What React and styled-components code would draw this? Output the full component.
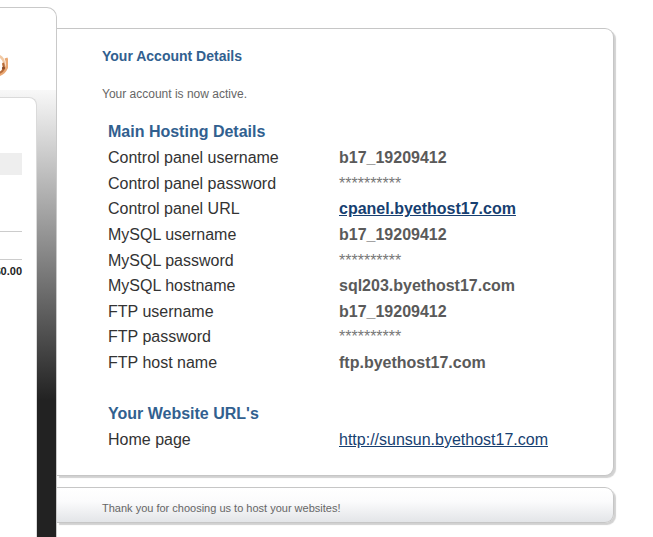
import React from "react";
import styled, { createGlobalStyle } from "styled-components";

const GlobalStyle = createGlobalStyle`
  body {
    margin: 0;
    background: #fff;
    font-family: "Liberation Sans", Arial, sans-serif;
  }
`;

const Page = styled.div`
  display: flex;
  align-items: flex-start;
  width: 653px;
  height: 537px;
  overflow: hidden;
`;

const Sidebar = styled.div`
  width: 57px;
  flex-shrink: 0;
  height: 530px;
  margin-top: 7px;
  box-sizing: border-box;
  border-top: 1px solid #c9c9c9;
  border-right: 1px solid #c9c9c9;
  border-top-right-radius: 10px;
  display: flex;
  flex-direction: column;
  overflow: hidden;
`;

const LogoArea = styled.div`
  height: 82px;
  flex-shrink: 0;
  padding-top: 41px;
  box-sizing: border-box;
`;

const Logo = styled.svg`
  display: block;
  margin-left: -14px;
`;

const SideLower = styled.div`
  flex: 1;
  padding: 7px 19px 0 0;
  background: linear-gradient(#f8f8f8 0, #222 310px, #222 100%);
`;

const SideCard = styled.div`
  height: 100%;
  background: #fff;
  border: 1px solid #dadada;
  border-left: none;
  border-bottom: none;
  border-top-right-radius: 8px;
  display: flex;
  flex-direction: column;
  align-items: flex-end;
  padding-right: 14px;
  overflow: hidden;
`;

const SideBand = styled.div`
  width: 200px;
  flex-shrink: 0;
  height: 22px;
  margin-top: 55px;
  background: #eeeeee;
`;

const SideRule = styled.div`
  width: 200px;
  flex-shrink: 0;
  height: 1px;
  margin-top: ${(p) => p.$gap}px;
  background: #cccccc;
`;

const SidePrice = styled.div`
  margin-top: 5px;
  font-size: 11px;
  line-height: 13px;
  font-weight: bold;
  color: #222;
  white-space: nowrap;
`;

const Main = styled.div`
  width: 557px;
  flex-shrink: 0;
  margin-top: 28px;
  display: flex;
  flex-direction: column;
`;

const Panel = styled.div`
  box-sizing: border-box;
  background: #fff;
  border: 1px solid #c6c6c6;
  border-left: none;
  border-radius: 0 9px 9px 0;
  box-shadow: 2px 2px 1px rgba(0, 0, 0, 0.18);
  padding: 19px 0 23px 45px;
`;

const Title = styled.div`
  font-size: 14px;
  line-height: 17px;
  font-weight: bold;
  color: #31608f;
`;

const Note = styled.div`
  margin-top: 22px;
  font-size: 12px;
  line-height: 14px;
  color: #666;
`;

const Details = styled.div`
  margin: 18px 0 0 6px;
  display: grid;
  grid-template-columns: 231px auto;
  grid-auto-rows: 25.65px;
  align-items: center;
  font-size: 16px;
  line-height: 19px;
`;

const Heading = styled.div`
  grid-column: 1 / span 2;
  font-weight: bold;
  color: #31608f;
`;

const Label = styled.div`
  color: #333;
`;

const Value = styled.div`
  color: ${(p) => (p.$secret ? "#777" : "#5a5a5a")};
  font-weight: ${(p) => (p.$secret ? "normal" : "bold")};
`;

const Link = styled.a`
  color: #173f71;
  font-weight: ${(p) => (p.$bold ? "bold" : "normal")};
  text-decoration: underline;
  justify-self: start;
`;

const Spacer = styled.div`
  grid-column: 1 / span 2;
`;

const Footer = styled.div`
  margin-top: 11px;
  height: 36px;
  box-sizing: border-box;
  border: 1px solid #c6c6c6;
  border-left: none;
  border-radius: 0 9px 9px 0;
  background: linear-gradient(#ffffff 0%, #fbfbfc 40%, #e3e5e8 100%);
  box-shadow: 2px 2px 1px rgba(0, 0, 0, 0.18);
  display: flex;
  align-items: center;
  padding: 6px 0 0 45px;
  font-size: 11px;
  color: #666;
`;

const hosting = [
  ["Control panel username", "b17_19209412"],
  ["Control panel password", "**********", "secret"],
  ["Control panel URL", "cpanel.byethost17.com", "link"],
  ["MySQL username", "b17_19209412"],
  ["MySQL password", "**********", "secret"],
  ["MySQL hostname", "sql203.byethost17.com"],
  ["FTP username", "b17_19209412"],
  ["FTP password", "**********", "secret"],
  ["FTP host name", "ftp.byethost17.com"],
];

const App = () => {
  return (
    <>
      <GlobalStyle />
      <Page>
        <Sidebar>
          <LogoArea>
            <Logo width="22" height="30" viewBox="0 0 22 30">
              <path d="M4 6 C 14 4, 20 11, 17 17" fill="none" stroke="#f1c9a4" strokeWidth="2.5" />
              <path d="M20 9 C 23 16, 20 24, 12 26" fill="none" stroke="#e9a874" strokeWidth="3" />
              <path d="M17 14 C 19 19, 17 23, 13 24" fill="none" stroke="#b86c3a" strokeWidth="2.2" />
              <circle cx="17.5" cy="19" r="1.6" fill="#8a4c2a" />
            </Logo>
          </LogoArea>
          <SideLower>
            <SideCard>
              <SideBand />
              <SideRule $gap={56} />
              <SideRule $gap={27} />
              <SidePrice>$0.00</SidePrice>
            </SideCard>
          </SideLower>
        </Sidebar>
        <Main>
          <Panel>
            <Title>Your Account Details</Title>
            <Note>Your account is now active.</Note>
            <Details>
              <Heading>Main Hosting Details</Heading>
              {hosting.map(([label, value, kind]) => (
                <React.Fragment key={label}>
                  <Label>{label}</Label>
                  {kind === "link" ? (
                    <Link $bold href="#">{value}</Link>
                  ) : (
                    <Value $secret={kind === "secret"}>{value}</Value>
                  )}
                </React.Fragment>
              ))}
              <Spacer />
              <Heading>Your Website URL's</Heading>
              <Label>Home page</Label>
              <Link href="#">http://sunsun.byethost17.com</Link>
            </Details>
          </Panel>
          <Footer>Thank you for choosing us to host your websites!</Footer>
        </Main>
      </Page>
    </>
  );
};

export default App;
